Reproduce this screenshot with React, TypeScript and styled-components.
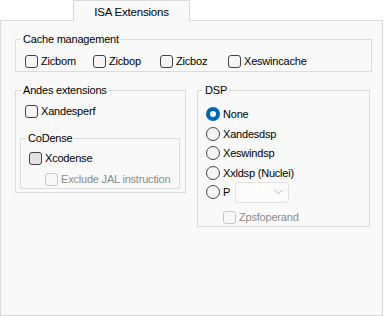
import styled, { createGlobalStyle } from 'styled-components';

const GlobalStyle = createGlobalStyle`
  html, body {
    margin: 0;
    padding: 0;
    background: #ffffff;
  }
  body {
    font-family: 'Liberation Sans', Arial, sans-serif;
    font-size: 11px;
    letter-spacing: -0.2px;
    color: #000000;
  }
  * {
    box-sizing: border-box;
  }
`;

const Window = styled.div`
  width: 384px;
  height: 316px;
  display: flex;
  flex-direction: column;
`;

const TabStrip = styled.div`
  display: flex;
  height: 21px;
`;

const Rule = styled.div<{ $width?: number }>`
  ${({ $width }) => ($width ? `width: ${$width}px;` : 'flex: 1;')}
  border-bottom: 1px solid #dadada;
`;

const Tab = styled.div`
  width: 117px;
  border: 1px solid #dadada;
  border-bottom: none;
  background: #f9f9f9;
  display: flex;
  align-items: center;
  justify-content: center;
  font-size: 11.5px;
  padding-top: 1px;
`;

const RightSpace = styled.div`
  width: 1px;
`;

const Panel = styled.div`
  width: 383px;
  height: 295px;
  border: 1px solid #dadada;
  border-top: none;
  background: #f9f9f9;
  padding: 10px 0 0 14px;
  display: flex;
  flex-direction: column;
  gap: 10px;
`;

const Group = styled.fieldset<{ $width: number }>`
  margin: 0;
  min-width: 0;
  width: ${({ $width }) => $width}px;
  border: 1px solid #dcdcdc;
  padding: 0 4px 0 8px;
  display: flex;
  flex-direction: column;
`;

const SubGroup = styled(Group)`
  margin: 11px 0 3px -4px;
`;

const Legend = styled.legend`
  padding: 0 2px;
  margin-left: -3px;
  line-height: 16px;
  height: 16px;
`;

const ColumnRow = styled.div`
  display: flex;
  align-items: flex-start;
  gap: 11px;
`;

const HorizontalOptions = styled.div`
  display: flex;
  padding: 6px 0 2px 1px;
`;

const Stack = styled.div<{ $top: number; $bottom: number; $gap: number }>`
  display: flex;
  flex-direction: column;
  padding: ${({ $top, $bottom }) => `${$top}px 0 ${$bottom}px 0`};
  gap: ${({ $gap }) => $gap}px;
`;

const Option = styled.label<{
  $width?: number;
  $indent?: number;
  $above?: number;
  $disabled?: boolean;
}>`
  display: flex;
  align-items: center;
  height: 16px;
  gap: 3px;
  ${({ $width }) => ($width ? `width: ${$width}px;` : '')}
  margin-left: ${({ $indent }) => $indent ?? 0}px;
  margin-top: ${({ $above }) => $above ?? 0}px;
  color: ${({ $disabled }) => ($disabled ? '#8c8c8c' : '#000000')};
  white-space: nowrap;
`;

const Box = styled.span<{ $disabled?: boolean; $hover?: boolean }>`
  width: 13px;
  height: 13px;
  border-radius: 3px;
  border: 1px solid ${({ $disabled }) => ($disabled ? '#c6c6c6' : '#424242')};
  background: ${({ $disabled, $hover }) =>
    $disabled ? '#f8f8f8' : $hover ? '#e4e4e4' : '#f5f5f5'};
  flex: none;
`;

const Radio = styled.span<{ $checked?: boolean }>`
  width: 14px;
  height: 14px;
  border-radius: 50%;
  flex: none;
  border: ${({ $checked }) => ($checked ? '4px solid #0067c0' : '1px solid #424242')};
  background: ${({ $checked }) => ($checked ? '#ffffff' : '#f5f5f5')};
`;

const Combo = styled.div`
  width: 54px;
  height: 21px;
  margin-left: 2px;
  border: 1px solid #e2e2e2;
  border-radius: 3px;
  background: #fbfbfb;
  display: flex;
  align-items: center;
  justify-content: flex-end;
  padding-right: 5px;
`;

const Chevron = () => (
  <svg width="9" height="6" viewBox="0 0 9 6">
    <path d="M0.5 0.8 L4.5 4.8 L8.5 0.8" fill="none" stroke="#b4b4b4" strokeWidth="1" />
  </svg>
);

type CheckProps = {
  label: string;
  width?: number;
  indent?: number;
  above?: number;
  disabled?: boolean;
  hover?: boolean;
};

const Check = ({ label, width, indent, above, disabled, hover }: CheckProps) => (
  <Option $width={width} $indent={indent} $above={above} $disabled={disabled}>
    <Box $disabled={disabled} $hover={hover} />
    {label}
  </Option>
);

const App = () => {
  const cacheOpts = [
    { label: 'Zicbom', width: 68 },
    { label: 'Zicbop', width: 67 },
    { label: 'Zicboz', width: 68 },
    { label: 'Xeswincache' },
  ];
  const dspOpts = ['None', 'Xandesdsp', 'Xeswindsp', 'Xxldsp (Nuclei)'];

  return (
    <>
      <GlobalStyle />
      <Window>
        <TabStrip>
          <Rule $width={73} />
          <Tab>ISA Extensions</Tab>
          <Rule />
          <RightSpace />
        </TabStrip>
        <Panel>
          <Group $width={357}>
            <Legend>Cache management</Legend>
            <HorizontalOptions>
              {cacheOpts.map((o) => (
                <Check key={o.label} label={o.label} width={o.width} />
              ))}
            </HorizontalOptions>
          </Group>
          <ColumnRow>
            <Group $width={171}>
              <Legend>Andes extensions</Legend>
              <Stack $top={5} $bottom={0} $gap={0}>
                <Check label="Xandesperf" indent={1} />
              </Stack>
              <SubGroup $width={160}>
                <Legend>CoDense</Legend>
                <Stack $top={4} $bottom={1} $gap={5}>
                  <Check label="Xcodense" hover />
                  <Check label="Exclude JAL instruction" indent={16} disabled />
                </Stack>
              </SubGroup>
            </Group>
            <Group $width={173}>
              <Legend>DSP</Legend>
              <Stack $top={8} $bottom={1} $gap={3.5}>
                {dspOpts.map((o, i) => (
                  <Option key={o}>
                    <Radio $checked={i === 0} />
                    {o}
                  </Option>
                ))}
                <Option>
                  <Radio />
                  P
                  <Combo>
                    <Chevron />
                  </Combo>
                </Option>
                <Check label="Zpsfoperand" indent={17} above={5.5} disabled />
              </Stack>
            </Group>
          </ColumnRow>
        </Panel>
      </Window>
    </>
  );
};

export default App;
